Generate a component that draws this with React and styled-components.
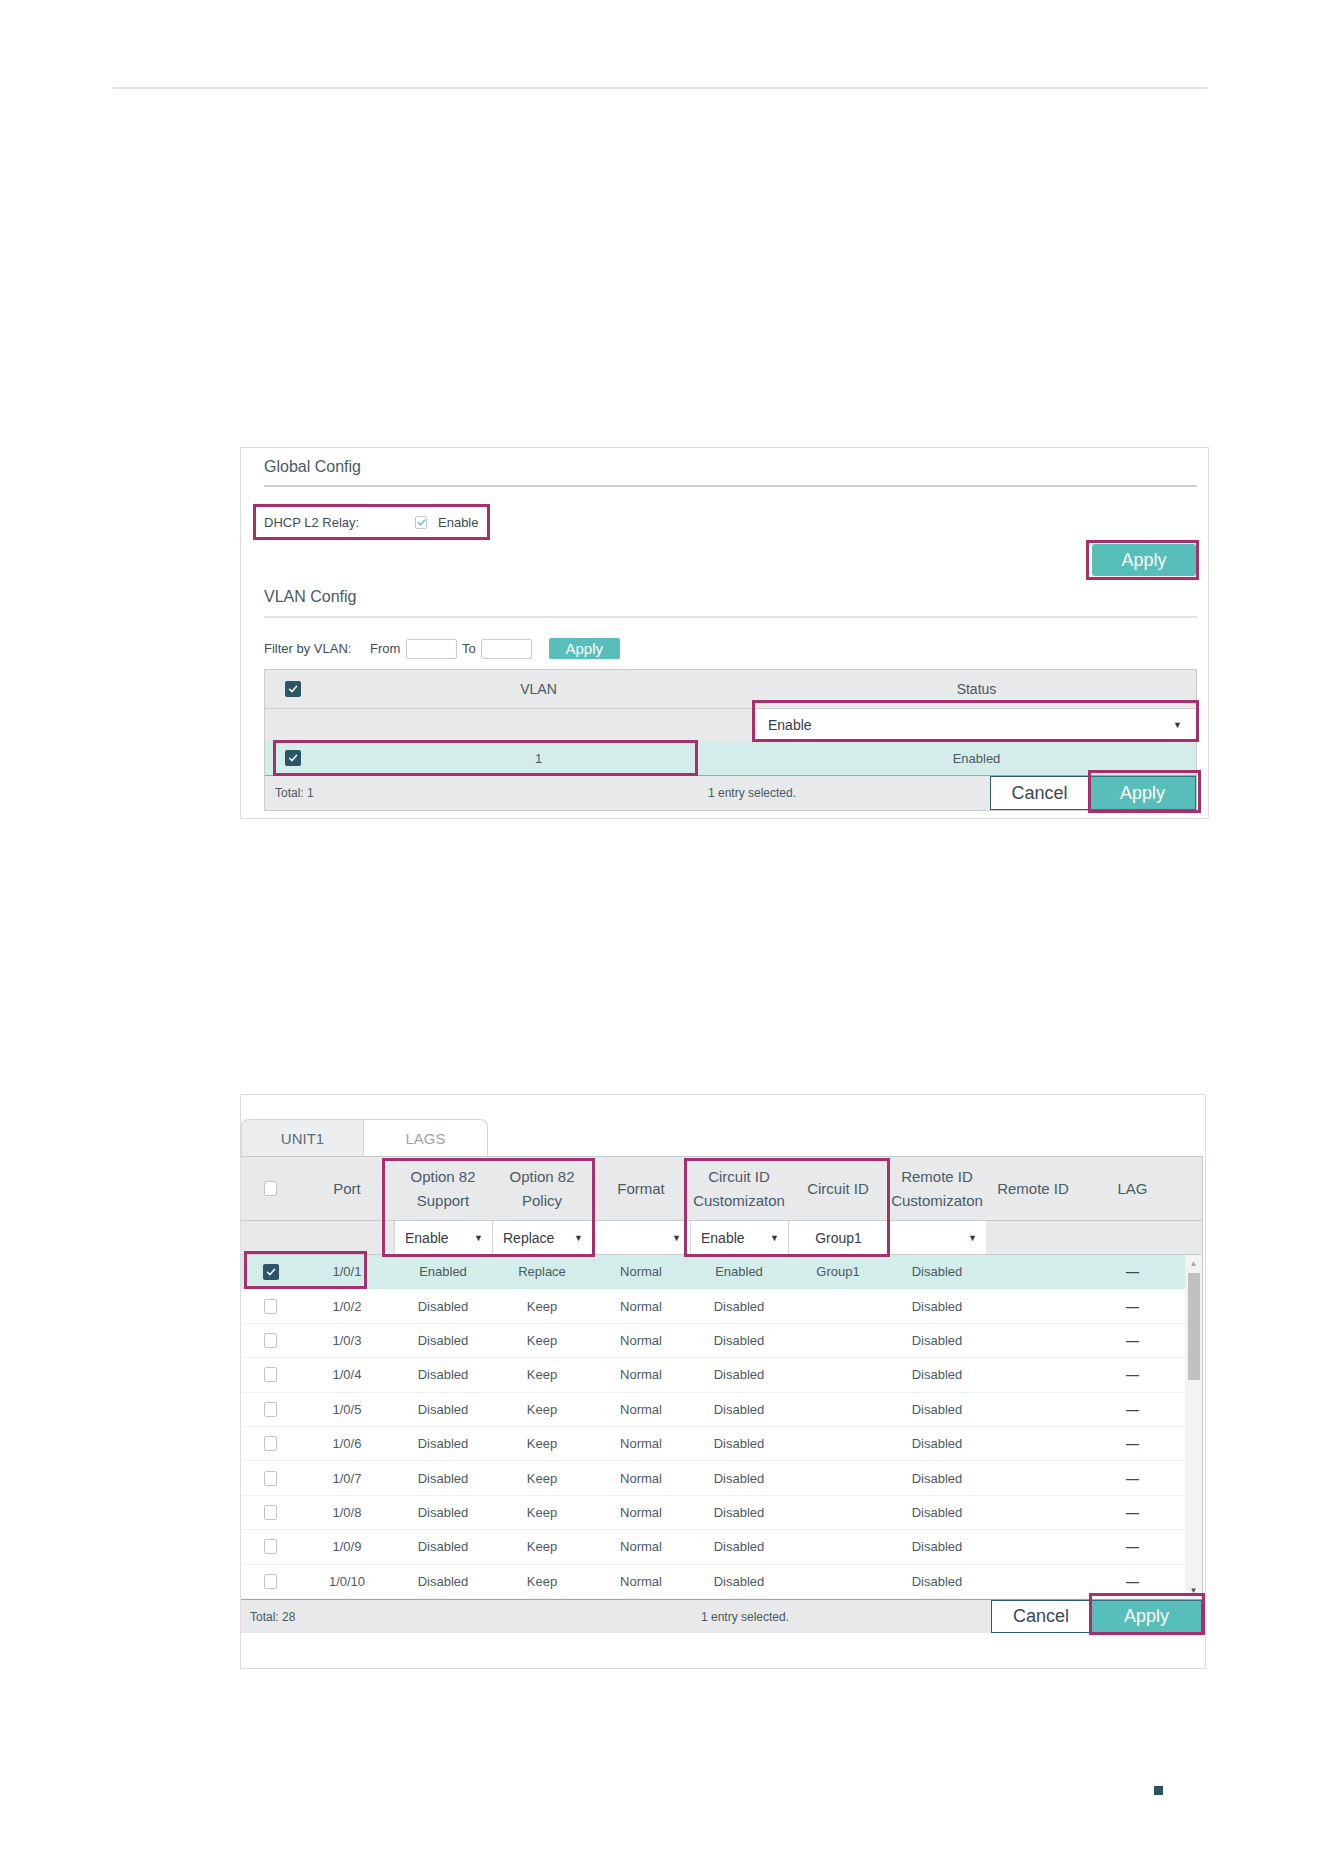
import React from 'react';
import styled, { createGlobalStyle } from 'styled-components';

const GlobalStyle = createGlobalStyle`
  html, body { margin: 0; padding: 0; background: #ffffff; }
  body { font-family: "Liberation Sans", Arial, sans-serif; color: #4a5760; }
  * { box-sizing: border-box; }
`;

const MAGENTA = '#a62f6c';
const TEAL = '#57beb9';
const DARK = '#2c5565';

const Page = styled.div`
  width: 1324px;
  height: 1872px;
  overflow: hidden;
  padding-top: 87px;
`;

const TopRule = styled.div`
  margin-left: 113px;
  width: 1095px;
  height: 2px;
  background: #dae5e7;
`;

const Panel = styled.section`
  position: relative;
  margin-left: 240px;
  margin-top: ${p => p.$mt}px;
  width: ${p => p.$w}px;
  height: ${p => p.$h}px;
  border: 1px solid #dadcdd;
  padding: ${p => p.$pad};
`;

const SectionTitle = styled.div`
  font-size: 16px;
  line-height: 18px;
  color: #4b5963;
  padding: ${p => p.$pad};
  border-bottom: 2px solid ${p => p.$line};
`;

const RelayRow = styled.div`
  margin-top: 17px;
  display: flex;
`;

const MarkBox = styled.div`
  display: inline-flex;
  align-items: center;
  border: 3px solid ${MAGENTA};
  height: ${p => p.$h}px;
  margin-left: ${p => p.$ml || 0}px;
  padding: ${p => p.$pad || '0'};
`;

const FieldLabel = styled.span`
  display: inline-block;
  width: ${p => p.$w}px;
  font-size: 13px;
  color: #3f4c55;
`;

const LightCheck = styled.span`
  width: 12px;
  height: 13px;
  border: 1px solid #c4c8ca;
  border-radius: 2px;
  background: #fff;
  display: inline-flex;
  align-items: center;
  justify-content: center;
  margin-right: 11px;
`;

const EnableText = styled.span`
  font-size: 13px;
  color: #3f4c55;
`;

const ApplyRow = styled.div`
  display: flex;
  justify-content: flex-end;
  margin-right: -2px;
`;

const BigButton = styled.button`
  width: ${p => p.$w}px;
  height: ${p => p.$h}px;
  border: none;
  border-radius: 3px;
  background: ${TEAL};
  color: #fff;
  font-family: "Liberation Sans", Arial, sans-serif;
  font-size: 18px;
  padding: 0;
`;

const FilterBar = styled.div`
  margin-top: 20px;
  height: 21px;
  display: flex;
  align-items: center;
  font-size: 13px;
  color: #3f4c55;
`;

const Txt = styled.span`
  display: inline-block;
  width: ${p => (p.$w ? `${p.$w}px` : 'auto')};
  margin-left: ${p => p.$ml || 0}px;
`;

const SmallInput = styled.span`
  display: inline-block;
  width: 51px;
  height: 20px;
  border: 1px solid #c9cdcf;
  border-radius: 2px;
  background: #fff;
  margin-left: ${p => p.$ml || 0}px;
`;

const SmallButton = styled.span`
  display: inline-flex;
  align-items: center;
  justify-content: center;
  width: 71px;
  height: 21px;
  background: ${TEAL};
  color: #fff;
  font-size: 15px;
  border-radius: 2px;
  margin-left: ${p => p.$ml || 0}px;
`;

/* ---------- Table 1 ---------- */
const Table1 = styled.div`
  position: relative;
  margin-top: 10px;
  border: 1px solid #c6cccf;
  width: 933px;
`;

const Grid1 = styled.div`
  display: grid;
  grid-template-columns: 55px 437px 1fr;
  align-items: center;
  height: ${p => p.$h}px;
  background: ${p => p.$bg};
  border-bottom: ${p => (p.$bb ? `1px solid ${p.$bb}` : 'none')};
  font-size: ${p => p.$fs || 13}px;
  color: #4b5963;
`;

const Cell = styled.div`
  display: flex;
  align-items: center;
  justify-content: center;
  height: 100%;
`;

const SelectBox = styled.div`
  height: 100%;
  background: #fff;
  display: flex;
  align-items: center;
  justify-content: ${p => (p.$center ? 'center' : 'space-between')};
  padding: ${p => p.$pad};
  font-size: 14px;
  color: #333d44;
  border-left: ${p => (p.$bl ? '1px solid #d3d8da' : 'none')};
`;

const Arrow = styled.span`
  font-size: 9px;
  color: #2e3a40;
`;

const Footer = styled.div`
  display: flex;
  align-items: stretch;
  height: ${p => p.$h}px;
  background: #e7e9ea;
  border-top: 1px solid #98aab0;
  font-size: 12px;
  color: #4b5963;
`;

const FootText = styled.div`
  display: flex;
  align-items: center;
  width: ${p => (p.$w ? `${p.$w}px` : 'auto')};
  flex: ${p => (p.$w ? 'none' : '1')};
  padding-left: ${p => p.$pl || 0}px;
`;

const CancelBtn = styled.div`
  width: ${p => p.$w}px;
  display: flex;
  align-items: center;
  justify-content: center;
  background: #fff;
  border: 1px solid #2d5d6b;
  font-size: 18px;
  color: #3a4850;
`;

const ApplyBtn = styled.div`
  width: ${p => p.$w}px;
  display: flex;
  align-items: center;
  justify-content: center;
  background: ${TEAL};
  border: 1px solid #2f6f78;
  font-size: 18px;
  color: #fff;
`;

const Overlay = styled.div`
  position: absolute;
  left: ${p => p.$x}px;
  top: ${p => p.$y}px;
  width: ${p => p.$w}px;
  height: ${p => p.$h}px;
  border: 3px solid ${MAGENTA};
  pointer-events: none;
  z-index: 3;
`;

/* ---------- Checkboxes ---------- */
const DarkBox = styled.span`
  width: 16px;
  height: 16px;
  border-radius: 2px;
  background: ${DARK};
  display: inline-flex;
  align-items: center;
  justify-content: center;
`;

const EmptyBox = styled.span`
  width: 13px;
  height: 15px;
  border-radius: 2px;
  border: 1px solid #bfc5c8;
  background: #fff;
  display: inline-block;
`;

const Tick = ({ color = '#fff', size = 10 }) => (
  <svg width={size} height={size} viewBox="0 0 10 10">
    <polyline points="1.5,5.2 4,7.6 8.6,2.2" fill="none" stroke={color} strokeWidth="1.5" strokeLinecap="round" strokeLinejoin="round" />
  </svg>
);

const Checked = () => (
  <DarkBox>
    <Tick />
  </DarkBox>
);

/* ---------- Table 2 ---------- */
const Tabs = styled.div`
  display: flex;
  height: 37px;
`;

const Tab = styled.div`
  width: ${p => p.$w}px;
  display: flex;
  align-items: center;
  justify-content: center;
  font-size: 15px;
  color: ${p => (p.$active ? '#5a6f7c' : '#9aa4aa')};
  background: ${p => (p.$active ? '#eceeef' : '#fff')};
  border: 1px solid #cfd4d6;
  border-bottom: none;
  border-left: ${p => (p.$active ? '1px solid #cfd4d6' : 'none')};
  border-radius: ${p => (p.$active ? '8px 0 0 0' : '0 8px 0 0')};
`;

const Table2 = styled.div`
  position: relative;
  width: 962px;
  border-top: 1px solid #c6cccf;
  border-right: 1px solid #c6cccf;
`;

const COLS2 = '59px 94px 98px 100px 98px 98px 100px 98px 94px 105px';

const Grid2 = styled.div`
  display: grid;
  grid-template-columns: ${COLS2} 1fr;
  align-items: center;
  height: ${p => p.$h}px;
  background: ${p => p.$bg};
  border-bottom: 1px solid ${p => p.$bb};
  font-size: ${p => p.$fs}px;
  color: ${p => p.$color};
`;

const HeadCell = styled.div`
  text-align: center;
  line-height: 24px;
  white-space: pre-line;
`;

const Body2 = styled.div`
  display: flex;
  height: 344px;
`;

const Rows = styled.div`
  width: 944px;
`;

const Row2 = styled.div`
  display: grid;
  grid-template-columns: ${COLS2};
  align-items: center;
  height: 34.4px;
  background: ${p => (p.$sel ? '#d3edeb' : '#fff')};
  border-bottom: 1px solid ${p => (p.$sel ? '#d3edeb' : '#f2f2f2')};
  font-size: 13px;
  color: #4d5a62;
`;

const Dash = styled.span`
  font-size: 13px;
  font-weight: bold;
  color: #3d484f;
`;

const Scrollbar = styled.div`
  width: 17px;
  background: #f3f3f3;
  display: flex;
  flex-direction: column;
  align-items: center;
`;

const ScrollArrow = styled.div`
  height: 17px;
  display: flex;
  align-items: center;
  justify-content: center;
  font-size: 8px;
  color: ${p => p.$c};
`;

const Thumb = styled.div`
  width: 12px;
  height: 107px;
  margin-top: 1px;
  background: #c1c1c1;
`;

const Spacer = styled.div`
  flex: 1;
`;

const PageMark = styled.div`
  margin-left: 1154px;
  margin-top: 117px;
  width: 9px;
  height: 9px;
  background: #2c5262;
`;

const headers = [
  'Port',
  'Option 82\nSupport',
  'Option 82\nPolicy',
  'Format',
  'Circuit ID\nCustomizaton',
  'Circuit ID',
  'Remote ID\nCustomizaton',
  'Remote ID',
  'LAG',
];

const rows = Array.from({ length: 10 }, (_, i) => {
  if (i === 0) {
    return { port: '1/0/1', sup: 'Enabled', pol: 'Replace', fmt: 'Normal', cc: 'Enabled', cid: 'Group1', rc: 'Disabled', sel: true };
  }
  return { port: `1/0/${i + 1}`, sup: 'Disabled', pol: 'Keep', fmt: 'Normal', cc: 'Disabled', cid: '', rc: 'Disabled', sel: false };
});

export default function App() {
  return (
    <Page>
      <GlobalStyle />
      <TopRule />

      <Panel $mt={358} $w={969} $h={372} $pad="0 11px 0 23px">
        <SectionTitle $pad="10px 0 9px" $line="#d4d0cd">Global Config</SectionTitle>
        <RelayRow>
          <MarkBox $h={36} $ml={-11} $pad="0 9px 0 8px">
            <FieldLabel $w={151}>DHCP L2 Relay:</FieldLabel>
            <LightCheck>
              <Tick color="#6fb5bd" size={9} />
            </LightCheck>
            <EnableText>Enable</EnableText>
          </MarkBox>
        </RelayRow>
        <ApplyRow>
          <MarkBox $h={40} $pad="1px 0 1px 3px">
            <BigButton $w={104} $h={32}>Apply</BigButton>
          </MarkBox>
        </ApplyRow>
        <SectionTitle $pad="8px 0 10px" $line="#e0e4e6">VLAN Config</SectionTitle>
        <FilterBar>
          <Txt $w={106}>Filter by VLAN:</Txt>
          <Txt $w={36}>From</Txt>
          <SmallInput />
          <Txt $ml={5}>To</Txt>
          <SmallInput $ml={5} />
          <SmallButton $ml={17}>Apply</SmallButton>
        </FilterBar>
        <Table1>
          <Grid1 $h={39} $bg="#e7e9ea" $bb="#c9ced1" $fs={14}>
            <Cell><Checked /></Cell>
            <Cell>VLAN</Cell>
            <Cell>Status</Cell>
          </Grid1>
          <Grid1 $h={32} $bg="#e7e9ea">
            <Cell />
            <Cell />
            <SelectBox $pad="0 14px 0 11px">
              <span>Enable</span>
              <Arrow>▼</Arrow>
            </SelectBox>
          </Grid1>
          <Grid1 $h={34} $bg="#d3edeb">
            <Cell><Checked /></Cell>
            <Cell>1</Cell>
            <Cell>Enabled</Cell>
          </Grid1>
          <Footer $h={35}>
            <FootText $w={443} $pl={10}>Total: 1</FootText>
            <FootText>1 entry selected.</FootText>
            <CancelBtn $w={99}>Cancel</CancelBtn>
            <ApplyBtn $w={107}>Apply</ApplyBtn>
          </Footer>
          <Overlay $x={487} $y={30} $w={447} $h={42} />
          <Overlay $x={8} $y={70} $w={425} $h={36} />
          <Overlay $x={823} $y={100} $w={113} $h={43} />
        </Table1>
      </Panel>

      <Panel $mt={275} $w={966} $h={575} $pad="24px 3px 0 0">
        <Tabs>
          <Tab $w={123} $active>UNIT1</Tab>
          <Tab $w={124}>LAGS</Tab>
        </Tabs>
        <Table2>
          <Grid2 $h={64} $bg="#e7e9ea" $bb="#c6cbce" $fs={15} $color="#4b5b66">
            <Cell><EmptyBox /></Cell>
            {headers.map(h => (
              <HeadCell key={h}>{h}</HeadCell>
            ))}
          </Grid2>
          <Grid2 $h={34} $bg="#e7e9ea" $bb="#c6cbce" $fs={14} $color="#333d44">
            <Cell />
            <Cell />
            <SelectBox $pad="0 9px 0 10px" $bl>
              <span>Enable</span>
              <Arrow>▼</Arrow>
            </SelectBox>
            <SelectBox $pad="0 9px 0 10px" $bl>
              <span>Replace</span>
              <Arrow>▼</Arrow>
            </SelectBox>
            <SelectBox $pad="0 9px 0 10px" $bl>
              <span />
              <Arrow>▼</Arrow>
            </SelectBox>
            <SelectBox $pad="0 9px 0 10px" $bl>
              <span>Enable</span>
              <Arrow>▼</Arrow>
            </SelectBox>
            <SelectBox $pad="0" $bl $center>
              <span>Group1</span>
            </SelectBox>
            <SelectBox $pad="0 9px 0 10px" $bl>
              <span />
              <Arrow>▼</Arrow>
            </SelectBox>
            <Cell />
          </Grid2>
          <Body2>
            <Rows>
              {rows.map(r => (
                <Row2 key={r.port} $sel={r.sel}>
                  <Cell>{r.sel ? <Checked /> : <EmptyBox />}</Cell>
                  <Cell>{r.port}</Cell>
                  <Cell>{r.sup}</Cell>
                  <Cell>{r.pol}</Cell>
                  <Cell>{r.fmt}</Cell>
                  <Cell>{r.cc}</Cell>
                  <Cell>{r.cid}</Cell>
                  <Cell>{r.rc}</Cell>
                  <Cell />
                  <Cell><Dash>—</Dash></Cell>
                </Row2>
              ))}
            </Rows>
            <Scrollbar>
              <ScrollArrow $c="#a3a3a3">▲</ScrollArrow>
              <Thumb />
              <Spacer />
              <ScrollArrow $c="#505050">▼</ScrollArrow>
            </Scrollbar>
          </Body2>
          <Footer $h={34}>
            <FootText $w={460} $pl={9}>Total: 28</FootText>
            <FootText>1 entry selected.</FootText>
            <CancelBtn $w={100}>Cancel</CancelBtn>
            <ApplyBtn $w={111}>Apply</ApplyBtn>
          </Footer>
          <Overlay $x={141} $y={1} $w={213} $h={99} />
          <Overlay $x={443} $y={1} $w={206} $h={99} />
          <Overlay $x={3} $y={94} $w={123} $h={38} />
          <Overlay $x={848} $y={436} $w={116} $h={42} />
        </Table2>
      </Panel>

      <PageMark />
    </Page>
  );
}
